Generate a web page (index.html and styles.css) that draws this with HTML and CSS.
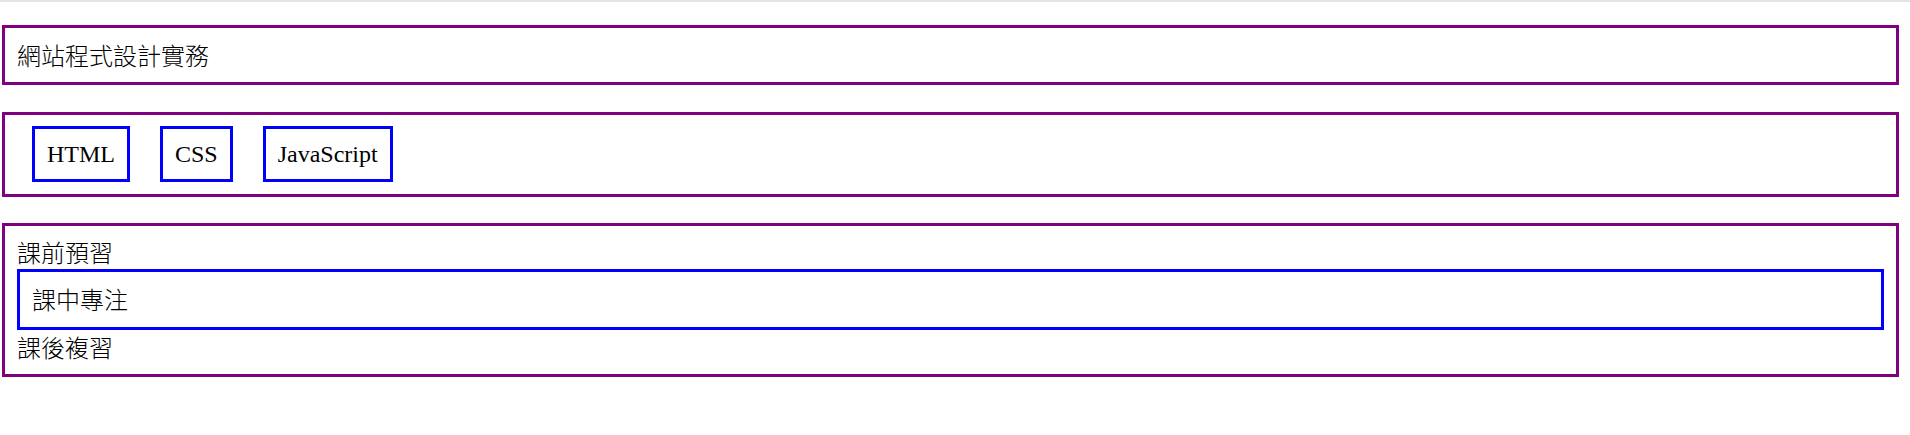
FILE: index.html
```html
<!DOCTYPE html>
<html lang="zh-Hant">
<head>
<meta charset="utf-8">
<title>網站程式設計實務</title>
<link rel="stylesheet" href="styles.css">
</head>
<body>
<div class="topline"></div>
<main class="page">
  <header class="box title">網站程式設計實務</header>
  <nav class="box tags">
    <span class="tag">HTML</span>
    <span class="tag">CSS</span>
    <span class="tag">JavaScript</span>
  </nav>
  <section class="box steps">
    <div class="step">課前預習</div>
    <div class="step focus">課中專注</div>
    <div class="step">課後複習</div>
  </section>
</main>
</body>
</html>
```
FILE: styles.css
```css
html, body {
  margin: 0;
  padding: 0;
  background: #ffffff;
}

body {
  font-family: "Noto Sans CJK TC", "Noto Sans", sans-serif;
  font-size: 24px;
  font-weight: 300;
  color: #000;
}

.topline {
  height: 2px;
  background: #e2e3e7;
}

.page {
  display: flex;
  flex-direction: column;
  padding: 23px 11px 0 2px;
}

.box {
  border: 3px solid #800080;
}

.title {
  padding: 10px 12px;
  line-height: 34px;
  margin-bottom: 27px;
}

.tags {
  display: flex;
  gap: 30px;
  padding: 11px 27px 12px;
  margin-bottom: 26px;
}

.tag {
  border: 3px solid #0000ff;
  padding: 11px 12px;
  font-family: "Liberation Serif", "Times New Roman", serif;
  font-size: 24px;
  font-weight: 400;
  line-height: 28px;
}

.steps {
  padding: 9px 12px 10px;
  line-height: 34px;
}

.focus {
  border: 3px solid #0000ff;
  padding: 10px 12px 11px;
}
```
